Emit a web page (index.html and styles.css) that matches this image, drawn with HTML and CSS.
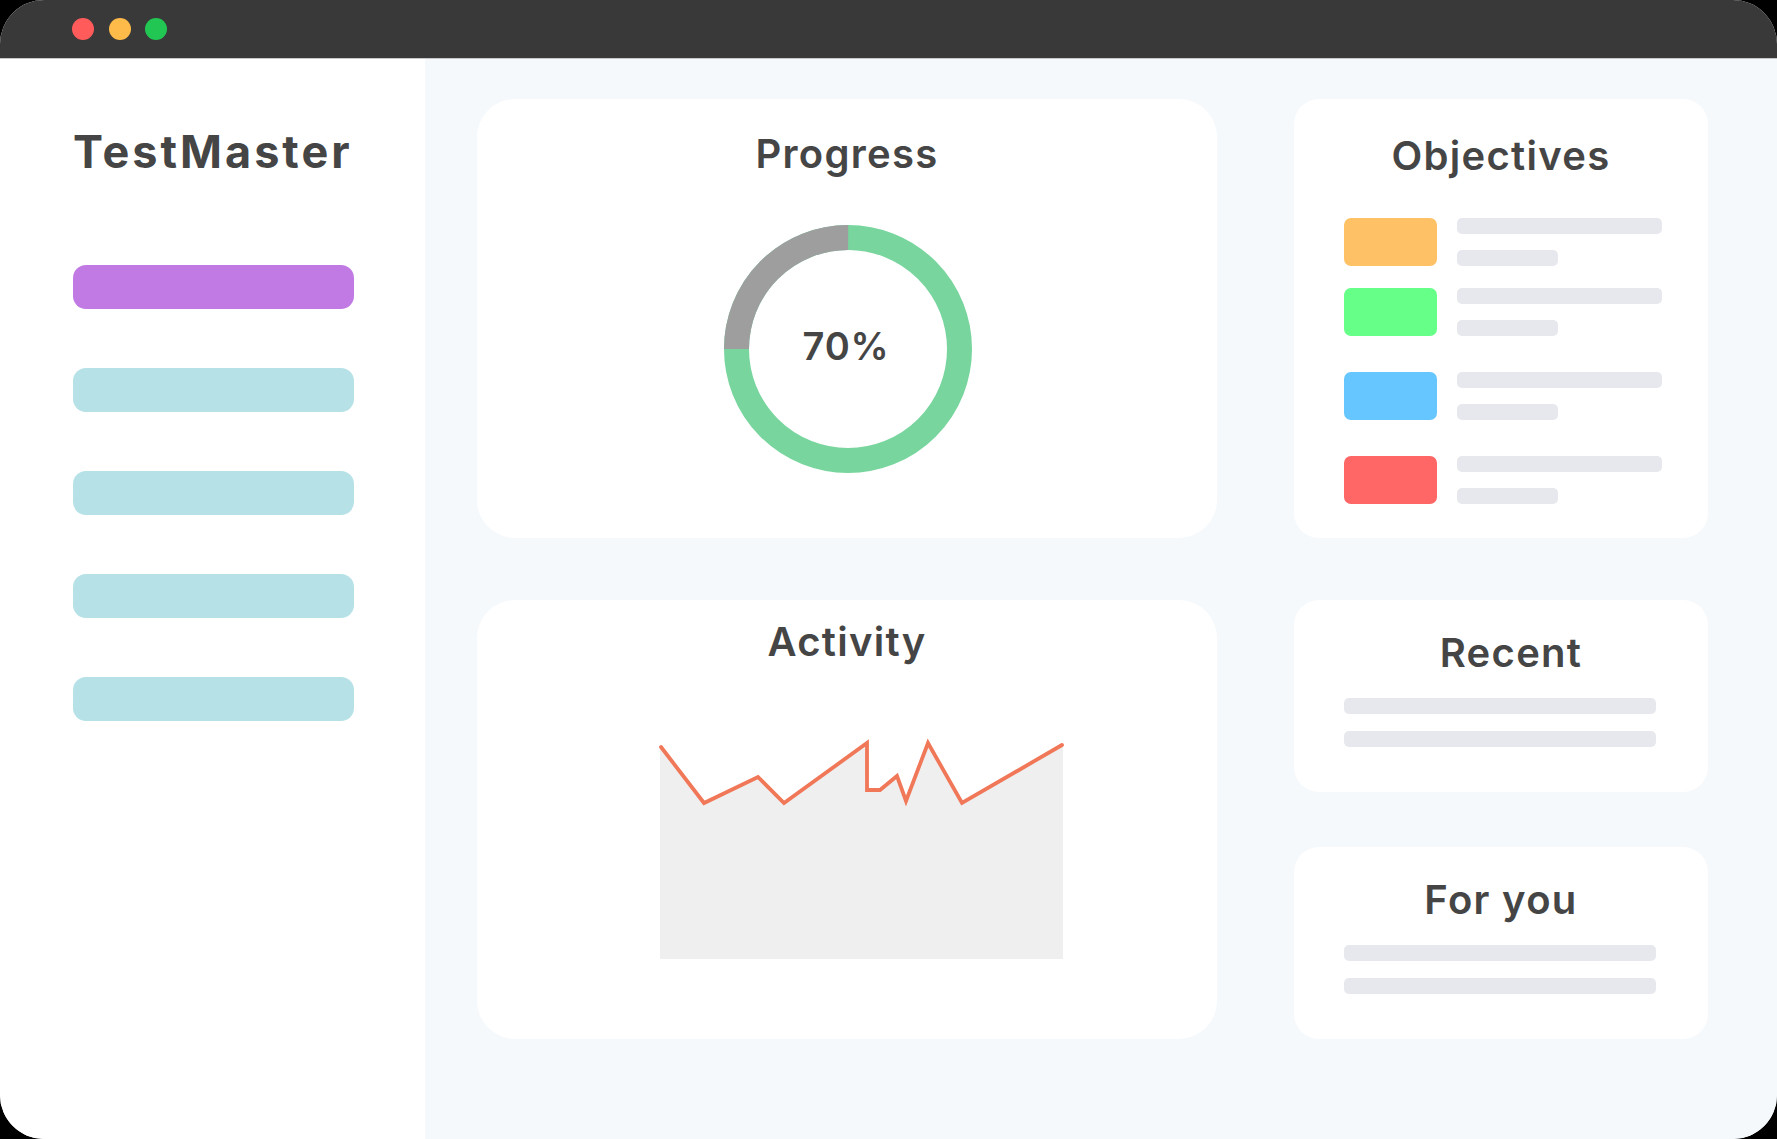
FILE: index.html
```html
<!DOCTYPE html>
<html lang="en">
<head>
<meta charset="utf-8">
<title>TestMaster</title>
<link rel="stylesheet" href="styles.css">
</head>
<body>
<div class="window">
  <div class="titlebar">
    <span class="dot dot-red"></span>
    <span class="dot dot-yellow"></span>
    <span class="dot dot-green"></span>
  </div>
  <div class="app">
    <aside class="sidebar">
      <h1 class="brand">TestMaster</h1>
      <nav class="nav">
        <div class="nav-item nav-item-active"></div>
        <div class="nav-item"></div>
        <div class="nav-item"></div>
        <div class="nav-item"></div>
        <div class="nav-item"></div>
      </nav>
    </aside>
    <main class="main">
      <div class="col col-left">
        <section class="card card-lg card-progress">
          <h2 class="card-title title-progress">Progress</h2>
          <div class="donut">
            <svg class="donut-svg" width="248" height="248" viewBox="0 0 248 248">
              <circle cx="124" cy="124" r="111.5" fill="none" stroke="#77d59d" stroke-width="25"/>
              <circle cx="124" cy="124" r="111.5" fill="none" stroke="#9e9e9e" stroke-width="25" stroke-dasharray="175.14 700.56" transform="rotate(180 124 124)"/>
            </svg>
            <span class="donut-label">70%</span>
          </div>
        </section>
        <section class="card card-lg card-activity">
          <h2 class="card-title title-activity">Activity</h2>
          <svg class="chart" width="740" height="240" viewBox="0 0 740 240">
            <polygon fill="#efefef" points="183,229 183,17 227,73 281,47 307,73 390,13 390,60 403,60 420,46 429,71 451,13 485,73 586,15 586,229"/>
            <polyline fill="none" stroke="#f07758" stroke-width="3.8" stroke-linejoin="miter" stroke-linecap="round" points="184,17 227,73 281,47 307,73 390,13 390,60 403,60 420,46 429,71 451,13 485,73 585,15"/>
          </svg>
        </section>
      </div>
      <div class="col col-right">
        <section class="card card-sm card-objectives">
          <h2 class="card-title title-objectives">Objectives</h2>
          <div class="obj-list">
            <div class="obj-row">
              <span class="obj-swatch swatch-orange"></span>
              <span class="obj-lines"><span class="bar bar-long"></span><span class="bar bar-short"></span></span>
            </div>
            <div class="obj-row obj-row-2">
              <span class="obj-swatch swatch-green"></span>
              <span class="obj-lines"><span class="bar bar-long"></span><span class="bar bar-short"></span></span>
            </div>
            <div class="obj-row obj-row-n">
              <span class="obj-swatch swatch-blue"></span>
              <span class="obj-lines"><span class="bar bar-long"></span><span class="bar bar-short"></span></span>
            </div>
            <div class="obj-row obj-row-n">
              <span class="obj-swatch swatch-red"></span>
              <span class="obj-lines"><span class="bar bar-long"></span><span class="bar bar-short"></span></span>
            </div>
          </div>
        </section>
        <section class="card card-sm card-recent">
          <h2 class="card-title title-recent">Recent</h2>
          <div class="text-lines">
            <span class="bar bar-wide"></span>
            <span class="bar bar-wide"></span>
          </div>
        </section>
        <section class="card card-sm card-foryou">
          <h2 class="card-title title-foryou">For you</h2>
          <div class="text-lines">
            <span class="bar bar-wide"></span>
            <span class="bar bar-wide"></span>
          </div>
        </section>
      </div>
    </main>
  </div>
</div>
</body>
</html>
```
FILE: styles.css
```css
* {
  box-sizing: border-box;
}

html, body {
  margin: 0;
  padding: 0;
  background: #000;
}

body {
  width: 1777px;
  height: 1139px;
  overflow: hidden;
  font-family: "Inter", "Open Sans", "Liberation Sans", sans-serif;
  color: #454545;
}

.window {
  width: 1777px;
  height: 1139px;
  border-radius: 44px;
  overflow: hidden;
  background: #fff;
  display: flex;
  flex-direction: column;
}

.titlebar {
  height: 59px;
  flex: none;
  background: #393939;
  border-bottom: 1px solid #c9c9c9;
  display: flex;
  align-items: center;
  gap: 14.5px;
  padding-left: 72px;
  padding-bottom: 1px;
}

.dot {
  width: 22px;
  height: 22px;
  border-radius: 50%;
  display: block;
}

.dot-red { background: #ff5b5b; }
.dot-yellow { background: #ffbb4a; }
.dot-green { background: #22c652; }

.app {
  flex: 1;
  display: flex;
  min-height: 0;
}

.sidebar {
  width: 425px;
  flex: none;
  background: #fff;
  padding: 70px 0 0 73px;
}

.brand {
  margin: 0;
  font-size: 45px;
  line-height: 45px;
  font-weight: 700;
  letter-spacing: 3px;
  color: #454545;
}

.nav {
  margin-top: 91px;
  display: flex;
  flex-direction: column;
  gap: 59px;
}

.nav-item {
  width: 281px;
  height: 44px;
  border-radius: 13px;
  background: #b5e1e7;
}

.nav-item-active {
  background: #c17ae3;
}

.main {
  flex: 1;
  background: #f5f9fc;
  display: flex;
  gap: 77px;
  padding: 40px 0 0 52px;
}

.col {
  display: flex;
  flex-direction: column;
}

.col-left {
  width: 740px;
  gap: 62px;
}

.col-right {
  width: 414px;
}

.card {
  background: #fff;
  display: flex;
  flex-direction: column;
}

.card-lg {
  height: 439px;
  border-radius: 38px;
  align-items: center;
}

.card-sm {
  border-radius: 25px;
}

.card-title {
  margin: 0;
  font-size: 40px;
  line-height: 40px;
  font-weight: 600;
  text-align: center;
  color: #454545;
  letter-spacing: 1.3px;
}

/* Progress */
.card-progress {
  padding-top: 35px;
}

.donut {
  margin-top: 51px;
  display: grid;
  place-items: center;
  margin-left: 2px;
}

.donut-svg,
.donut-label {
  grid-area: 1 / 1;
}

.donut-svg {
  display: block;
}

.donut-label {
  font-size: 38px;
  line-height: 38px;
  font-weight: 600;
  color: #454545;
  margin: 0 4px 6px 0;
  letter-spacing: 0.8px;
}

/* Activity */
.card-activity {
  padding-top: 22px;
}

.chart {
  display: block;
  margin-top: 68px;
}

/* Objectives */
.card-objectives {
  height: 439px;
  padding-top: 37px;
}

.obj-list {
  margin-top: 42px;
  padding-left: 50px;
  display: flex;
  flex-direction: column;
}

.obj-row {
  display: flex;
  gap: 20px;
}

.obj-row-2 {
  margin-top: 22px;
}

.obj-row-n {
  margin-top: 36px;
}

.obj-swatch {
  width: 93px;
  height: 48px;
  border-radius: 7px;
  display: block;
}

.swatch-orange { background: #ffc166; }
.swatch-green { background: #66ff87; }
.swatch-blue { background: #66c6ff; }
.swatch-red { background: #ff6666; }

.obj-lines {
  height: 48px;
  display: flex;
  flex-direction: column;
  justify-content: space-between;
}

.bar {
  display: block;
  height: 16px;
  border-radius: 5px;
  background: #e7e8ee;
}

.bar-long { width: 205px; }
.bar-short { width: 101px; }

/* Recent / For you */
.card-recent {
  height: 192px;
  margin-top: 62px;
  padding-top: 33px;
}

.card-foryou {
  height: 192px;
  margin-top: 55px;
  padding-top: 33px;
}

.title-recent {
  padding-left: 20px;
}

.text-lines {
  margin-top: 25px;
  padding-left: 50px;
  display: flex;
  flex-direction: column;
  gap: 17px;
}

.bar-wide {
  width: 312px;
}
```
